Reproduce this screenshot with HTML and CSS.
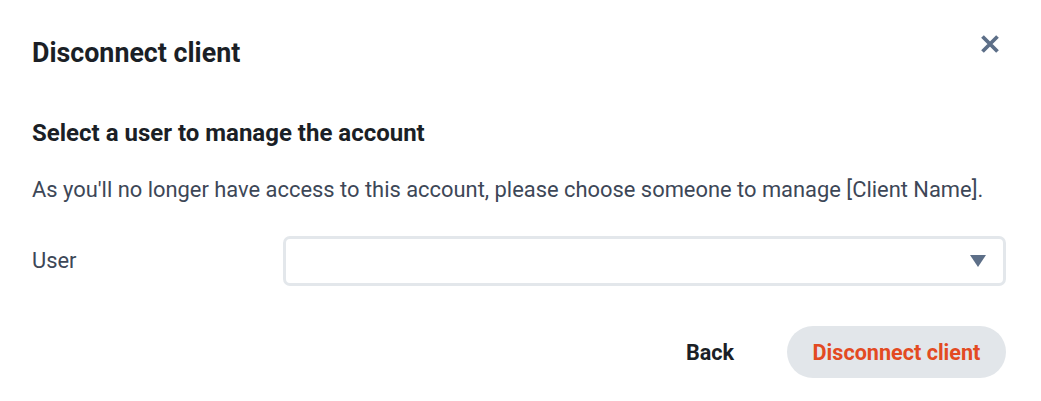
FILE: index.html
```html
<!DOCTYPE html>
<html>
<head>
<meta charset="utf-8">
<link rel="stylesheet" href="styles.css">
</head>
<body>
<div class="modal">
  <div class="header">
    <h1 class="title">Disconnect client</h1>
    <button class="close" aria-label="Close">
      <svg width="20" height="20" viewBox="0 0 20 20"><path d="M2.5 2.5 L17.5 17.5 M17.5 2.5 L2.5 17.5" stroke="#5d6f88" stroke-width="3.8" stroke-linecap="butt"/></svg>
    </button>
  </div>
  <h2 class="subtitle">Select a user to manage the account</h2>
  <p class="desc">As you'll no longer have access to this account, please choose someone to manage [Client Name].</p>
  <div class="field">
    <label class="label">User</label>
    <div class="select">
      <svg class="caret" width="16" height="12" viewBox="0 0 16 12"><path d="M0 0 H16 L8 12 Z" fill="#5d6f88"/></svg>
    </div>
  </div>
  <div class="actions">
    <button class="back">Back</button>
    <button class="primary">Disconnect client</button>
  </div>
</div>
</body>
</html>
```
FILE: styles.css
```css
* { box-sizing: border-box; }
html, body { margin: 0; padding: 0; background: #fff; }
body { font-family: Roboto, "Liberation Sans", sans-serif; color: #1b1f26; }
.modal { width: 1041px; padding: 0 35px 0 32px; }
.header { display: flex; justify-content: space-between; align-items: flex-start; padding-top: 37px; }
.title { margin: 0; font-size: 26.8px; font-weight: 700; line-height: 32px; color: #1b1f26; }
.close { border: 0; background: none; padding: 0; margin: -3px 6px 0 0; width: 20px; height: 20px; cursor: pointer; }
.close svg { display: block; }
.subtitle { margin: 49px 0 0 0; font-size: 24px; font-weight: 700; line-height: 30px; color: #1b1f26; }
.desc { margin: 28px 0 0 0; font-size: 21.9px; line-height: 28px; color: #3d4757; }
.field { display: flex; align-items: center; margin-top: 32px; }
.label { width: 251px; font-size: 21.9px; color: #3d4757; line-height: 28px; }
.select { flex: 1; height: 50px; border: 3px solid #e3e7eb; border-radius: 7px; display: flex; align-items: center; justify-content: flex-end; padding-right: 17px; }
.caret { display: block; }
.actions { display: flex; justify-content: flex-end; align-items: center; margin-top: 40px; gap: 53px; }
.back { border: 0; background: none; padding: 0; font-family: inherit; font-size: 21.6px; font-weight: 700; color: #1b1f26; }
.primary { border: 0; background: #e2e6ea; border-radius: 26px; height: 52px; width: 219px; font-family: inherit; font-size: 21.6px; font-weight: 700; color: #e34a22; }
```
